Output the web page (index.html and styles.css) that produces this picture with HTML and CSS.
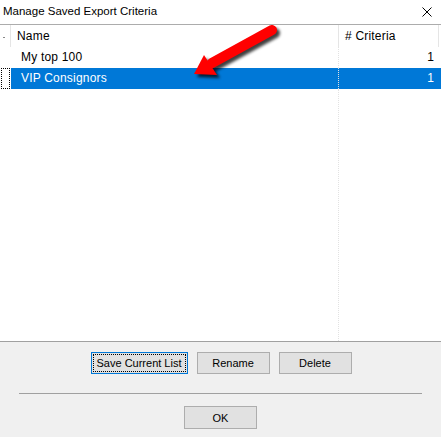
FILE: index.html
```html
<!DOCTYPE html>
<html lang="en">
<head>
  <meta charset="UTF-8" />
  <title>Manage Saved Export Criteria</title>
  <link rel="stylesheet" href="styles.css">
</head>
<body>
  <div class="dialog">

    <div class="titlebar">
      <span class="caption">Manage Saved Export Criteria</span>
      <svg class="close" width="10" height="10" viewBox="0 0 10 10">
        <path d="M0.5 0.5 L9.5 9.5 M9.5 0.5 L0.5 9.5" stroke="#000" stroke-width="1" fill="none" />
      </svg>
    </div>

    <!-- saved criteria list -->
    <div class="list">
      <div class="row header">
        <div class="cell gutter"><span class="tick"></span></div>
        <div class="cell name">Name</div>
        <div class="cell count">&#35; Criteria</div>
        <div class="cell rest"></div>
      </div>
      <div class="row">
        <div class="cell gutter"></div>
        <div class="cell name">My top 100</div>
        <div class="cell count num">1</div>
        <div class="cell rest"></div>
      </div>
      <div class="row selected">
        <div class="cell gutter"><span class="focus"></span></div>
        <div class="cell name">VIP Consignors</div>
        <div class="cell count num">1</div>
        <div class="cell rest"></div>
      </div>
      <div class="row filler">
        <div class="cell gutter"></div>
        <div class="cell name"></div>
        <div class="cell count"></div>
        <div class="cell rest"></div>
      </div>

      <svg class="pointer" width="441" height="100" viewBox="0 0 441 100">
        <defs>
          <filter id="soft" x="-20%" y="-20%" width="140%" height="140%">
            <feGaussianBlur stdDeviation="1.6" />
          </filter>
        </defs>
        <g transform="translate(3 3)" filter="url(#soft)" opacity="0.75">
          <line x1="272" y1="5" x2="212" y2="38" stroke="#000" stroke-width="10" stroke-linecap="round" />
          <polygon points="194,49 204,30 217,50" fill="#000" />
        </g>
        <line x1="272" y1="5" x2="212" y2="38" stroke="#f00" stroke-width="10" stroke-linecap="round" />
        <polygon points="194,49 204,30 217,50" fill="#f00" />
      </svg>
    </div>

    <div class="panel">
      <div class="actions">
        <button class="btn default"><span>Save Current List</span></button>
        <button class="btn">Rename</button>
        <button class="btn">Delete</button>
      </div>
      <hr class="divider">
      <div class="actions confirm">
        <button class="btn">OK</button>
      </div>
    </div>

  </div>
</body>
</html>
```

FILE: styles.css
```css
* { box-sizing: border-box; }
body {
  margin: 0;
  background: #fff;
  font-family: "Segoe UI", "Liberation Sans", sans-serif;
  font-size: 12px;
  color: #000;
}
.dialog {
  width: 441px;
  height: 437px;
  display: flex;
  flex-direction: column;
  overflow: hidden;
}

/* title bar */
.titlebar {
  height: 25px;
  display: flex;
  align-items: center;
  justify-content: space-between;
  padding: 0 9px 0 3px;
  border-bottom: 1px solid #acacac;
  flex-shrink: 0;
}
.caption { margin-top: -2px; font-size: 11.5px; }
.close { margin-top: -1px; }

/* list view */
.list {
  position: relative;
  flex: 1;
  display: flex;
  flex-direction: column;
  background: #fff;
  border-bottom: 1px solid #a0a0a0;
  letter-spacing: 0.2px;
}
.row {
  display: grid;
  grid-template-columns: 11px 328px 100px 1fr;
  height: 21px;
  line-height: 21px;
}
.row.header { height: 22px; line-height: 22px; }
.row.filler { flex: 1; }
.cell {
  white-space: nowrap;
  overflow: hidden;
  position: relative;
}
.header .cell { border-right: 1px solid #e5e5e5; }
.header .rest { border-right: 0; }
.header .name { padding-left: 6px; }
.header .count { padding-left: 6px; }
.tick {
  position: absolute;
  left: 3px;
  top: 12px;
  width: 2px;
  height: 1px;
  background: #888;
}
.name { padding-left: 10px; }
.row:not(.header) .name { border-right: 1px dotted #e2e2e2; }
.num { text-align: right; padding-right: 5px; }

.selected .name,
.selected .count,
.selected .rest {
  background: #0078d7;
  color: #fff;
}
.selected .name { border-right: 1px solid #fff; }
.focus {
  position: absolute;
  left: 1px;
  top: 0;
  width: 9px;
  height: 21px;
  border: 1px dotted #000;
}

.pointer {
  position: absolute;
  left: 0;
  top: 0;
  pointer-events: none;
}

/* lower button panel */
.panel {
  height: 95px;
  flex-shrink: 0;
  background: #f0f0f0;
  padding-top: 10px;
}
.actions {
  display: flex;
  justify-content: center;
  gap: 9px;
  padding-left: 1px;
}
.btn {
  width: 73px;
  height: 22px;
  padding: 0;
  font: inherit;
  font-size: 11px;
  white-space: nowrap;
  color: #000;
  background: #e1e1e1;
  border: 1px solid #adadad;
  border-radius: 0;
}
.btn.default {
  width: 97px;
  border-color: #0078d7;
  padding: 1px;
}
.btn.default span {
  display: block;
  height: 100%;
  line-height: 16px;
  border: 1px dotted #000;
}
.divider {
  margin: 19px 19px 0;
  border: 0;
  border-top: 1px solid #a0a0a0;
  height: 0;
}
.confirm { margin-top: 12px; padding-left: 0; }
.confirm .btn { height: 23px; }
```
